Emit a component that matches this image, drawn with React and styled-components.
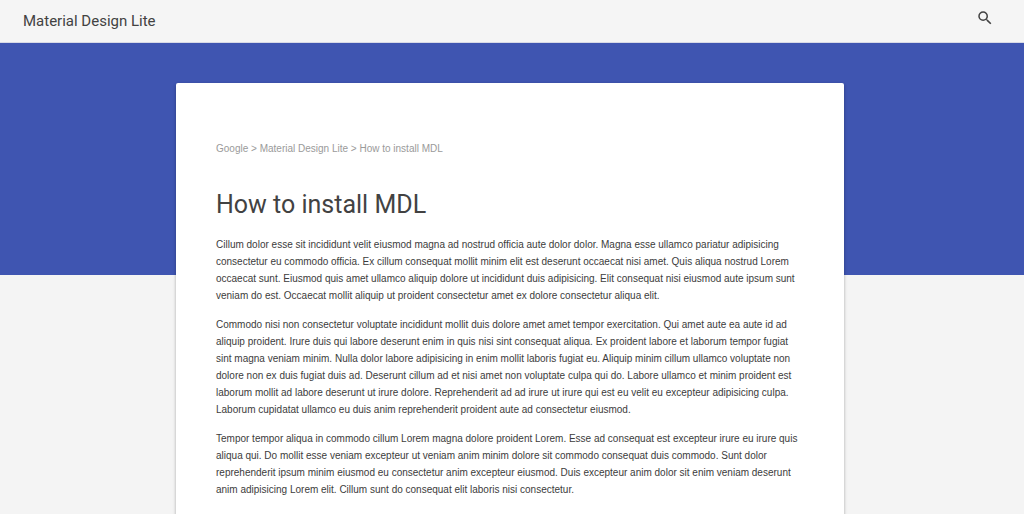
import React from "react";
import styled, { createGlobalStyle } from "styled-components";

const GlobalStyle = createGlobalStyle`
  *, *::before, *::after { box-sizing: border-box; }
  html { scrollbar-width: none; }
  body {
    margin: 0;
    background: #f4f4f4;
    color: #3c3c3c;
    font-family: "Liberation Sans", Helvetica, Arial, sans-serif;
  }
`;

const Header = styled.header`
  display: flex;
  align-items: center;
  justify-content: space-between;
  height: 43px;
  padding: 0 23px 1px;
  border-bottom: 1px solid #d8dae6;
  background: #f5f5f5;
`;

const SiteTitle = styled.span`
  font: 400 15px/20px Roboto, sans-serif;
  color: #424242;
`;

const SearchButton = styled.button`
  display: grid;
  place-items: center;
  width: 32px;
  height: 32px;
  padding: 0 0 6px;
  border: 0;
  background: none;
  color: #424242;
  cursor: pointer;

  svg { width: 18px; height: 18px; fill: currentColor; }
`;

const Ribbon = styled.div`
  height: 232px;
  background: #3f55b1;
`;

const Main = styled.main`
  display: flex;
  justify-content: center;
  margin-top: -192px;
  padding: 0 180px 54px 176px;
`;

const Card = styled.article`
  flex: 1;
  padding: 57px 40px;
  border-radius: 2px;
  background: #fff;
  box-shadow: 0 1px 3px rgba(0, 0, 0, 0.2), 0 2px 4px rgba(0, 0, 0, 0.12);
`;

const Breadcrumb = styled.nav`
  font-size: 10px;
  line-height: 17px;
  color: #9a9a9a;

  a { color: inherit; text-decoration: none; }
`;

const Heading = styled.h1`
  margin: 30px 0 13px;
  font: 400 25px/36px Roboto, sans-serif;
  color: #424242;
`;

const Paragraph = styled.p`
  margin: 0 0 12px;
  font-size: 10px;
  line-height: 17px;
`;

const paragraphs = [
  `Cillum dolor esse sit incididunt velit eiusmod magna ad nostrud officia aute dolor dolor. Magna esse ullamco pariatur adipisicing
consectetur eu commodo officia. Ex cillum consequat mollit minim elit est deserunt occaecat nisi amet. Quis aliqua nostrud Lorem
occaecat sunt. Eiusmod quis amet ullamco aliquip dolore ut incididunt duis adipisicing. Elit consequat nisi eiusmod aute ipsum sunt
veniam do est. Occaecat mollit aliquip ut proident consectetur amet ex dolore consectetur aliqua elit.`,
  `Commodo nisi non consectetur voluptate incididunt mollit duis dolore amet amet tempor exercitation. Qui amet aute ea aute id ad
aliquip proident. Irure duis qui labore deserunt enim in quis nisi sint consequat aliqua. Ex proident labore et laborum tempor fugiat
sint magna veniam minim. Nulla dolor labore adipisicing in enim mollit laboris fugiat eu. Aliquip minim cillum ullamco voluptate non
dolore non ex duis fugiat duis ad. Deserunt cillum ad et nisi amet non voluptate culpa qui do. Labore ullamco et minim proident est
laborum mollit ad labore deserunt ut irure dolore. Reprehenderit ad ad irure ut irure qui est eu velit eu excepteur adipisicing culpa.
Laborum cupidatat ullamco eu duis anim reprehenderit proident aute ad consectetur eiusmod.`,
  `Tempor tempor aliqua in commodo cillum Lorem magna dolore proident Lorem. Esse ad consequat est excepteur irure eu irure quis
aliqua qui. Do mollit esse veniam excepteur ut veniam anim minim dolore sit commodo consequat duis commodo. Sunt dolor
reprehenderit ipsum minim eiusmod eu consectetur anim excepteur eiusmod. Duis excepteur anim dolor sit enim veniam deserunt
anim adipisicing Lorem elit. Cillum sunt do consequat elit laboris nisi consectetur.`,
];

export default function App() {
  return (
    <>
      <GlobalStyle />
      <Header>
        <SiteTitle>Material Design Lite</SiteTitle>
        <SearchButton type="button" aria-label="Search">
          <svg viewBox="0 0 24 24" aria-hidden="true">
            <path d="M15.5 14h-.79l-.28-.27A6.47 6.47 0 0 0 16 9.5 6.5 6.5 0 1 0 9.5 16c1.61 0 3.09-.59 4.23-1.57l.27.28v.79l5 4.99L20.49 19l-4.99-5zm-6 0C7.01 14 5 11.99 5 9.5S7.01 5 9.5 5 14 7.01 14 9.5 11.99 14 9.5 14z" />
          </svg>
        </SearchButton>
      </Header>
      <Ribbon />
      <Main>
        <Card>
          <Breadcrumb aria-label="Breadcrumb">
            <a href="#google">Google</a> &gt; <a href="#mdl">Material Design Lite</a> &gt; How to install MDL
          </Breadcrumb>
          <Heading>How to install MDL</Heading>
          {paragraphs.map((text) => (
            <Paragraph key={text}>{text}</Paragraph>
          ))}
        </Card>
      </Main>
    </>
  );
}
